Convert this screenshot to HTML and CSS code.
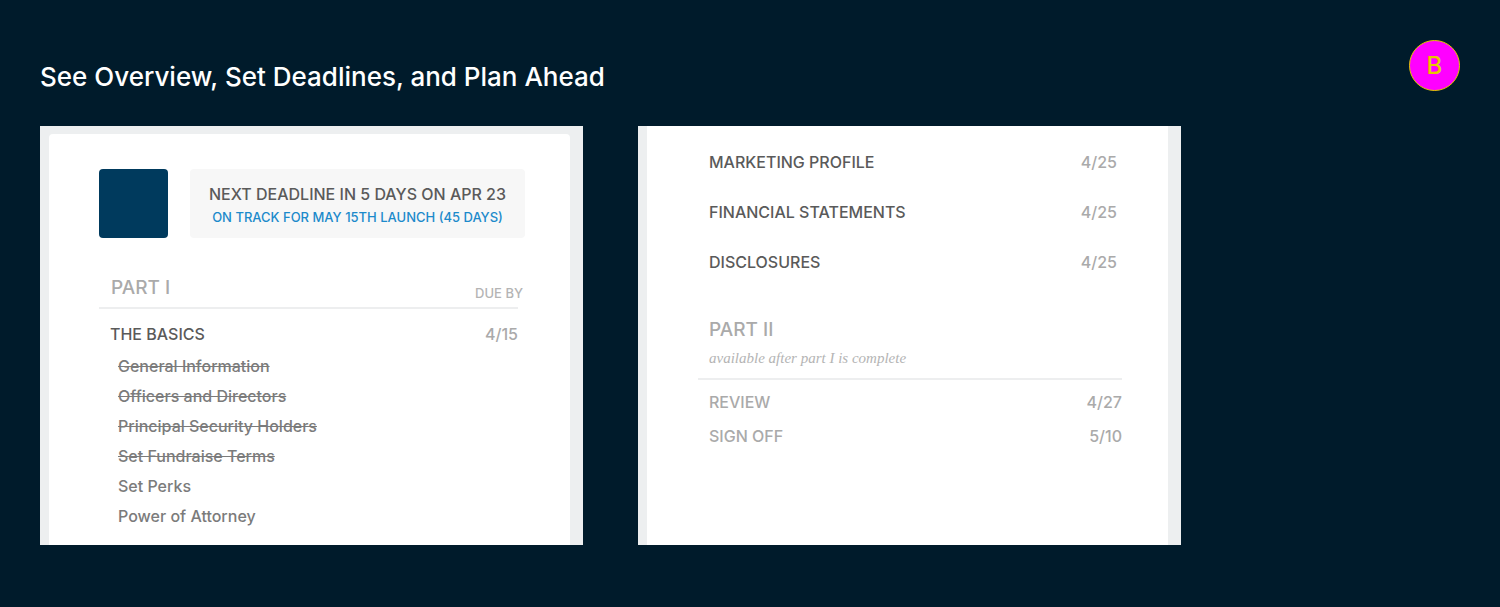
FILE: index.html
```html
<!DOCTYPE html>
<html lang="en">
<head>
  <meta charset="UTF-8">
  <meta name="viewport" content="width=device-width, initial-scale=1.0">
  <title>Overview and Deadlines</title>
  <link rel="stylesheet" href="styles.css">
</head>
<body>
  <header class="header">
    <h1>See Overview, Set Deadlines, and Plan Ahead</h1>
    <span class="badge">B</span>
  </header>

  <main class="panels">
    <div class="panel panel-first">
      <section class="sheet">
        <div class="deadline">
          <div class="swatch"></div>
          <div class="callout">
            <p class="next">NEXT DEADLINE IN 5 DAYS ON APR 23</p>
            <p class="track">ON TRACK FOR MAY 15TH LAUNCH (45 DAYS)</p>
          </div>
        </div>

        <div class="part">
          <h2>PART I</h2>
          <span class="due">DUE BY</span>
        </div>
        <div class="basics">
          <div class="row">
            <h3>THE BASICS</h3>
            <span class="date">4/15</span>
          </div>
          <ul class="steps">
            <li><s>General Information</s></li>
            <li><s>Officers and Directors</s></li>
            <li><s>Principal Security Holders</s></li>
            <li><s>Set Fundraise Terms</s></li>
            <li>Set Perks</li>
            <li>Power of Attorney</li>
          </ul>
        </div>
      </section>
    </div>

    <div class="panel">
      <section class="sheet">
        <div class="tasks">
          <div class="row">
            <h3>MARKETING PROFILE</h3>
            <span class="date">4/25</span>
          </div>
          <div class="row">
            <h3>FINANCIAL STATEMENTS</h3>
            <span class="date">4/25</span>
          </div>
          <div class="row">
            <h3>DISCLOSURES</h3>
            <span class="date">4/25</span>
          </div>
        </div>

        <div class="part-two">
          <h2>PART II</h2>
          <p class="note">available after part I is complete</p>
        </div>
        <div class="later">
          <div class="row">
            <h3>REVIEW</h3>
            <span class="date">4/27</span>
          </div>
          <div class="row">
            <h3>SIGN OFF</h3>
            <span class="date">5/10</span>
          </div>
        </div>
      </section>
    </div>
  </main>
</body>
</html>
```
FILE: styles.css
```css
* {
  box-sizing: border-box;
}

body {
  margin: 0;
  padding: 40px;
  background-color: #001b2b;
  color: #5a5a5a;
  font-family: Inter, "Open Sans", sans-serif;
  font-weight: 500;
}

h1, h2, h3, p, ul {
  margin: 0;
  padding: 0;
  font-weight: 500;
}

.header {
  display: flex;
  justify-content: space-between;
  align-items: flex-start;
}

h1 {
  padding-top: 21px;
  color: #fff;
  font-size: 26px;
  line-height: 32px;
}

.badge {
  width: 51px;
  height: 51px;
  border: 1px solid #e6c800;
  border-radius: 50%;
  background-color: #f0f;
  color: #e6c800;
  font-size: 24px;
  line-height: 50px;
  text-align: center;
}

.panels {
  display: grid;
  grid-template-columns: 1fr 1fr;
  gap: 55px;
  max-width: 1141px;
  margin-top: 33px;
}

.panel {
  display: flex;
  padding: 0 13px 0 9px;
  background-color: #edeff0;
}

.panel-first {
  padding-top: 8px;
}

.sheet {
  flex: 1;
  padding: 0 46px 14px 51px;
  background-color: #fff;
}

.panel-first .sheet {
  padding: 35px 45px 14px 50px;
  border-radius: 4px 4px 0 0;
}

/* Deadline summary */
.deadline {
  display: flex;
  gap: 22px;
}

.swatch {
  width: 69px;
  height: 69px;
  border-radius: 4px;
  background-color: #003a5d;
}

.callout {
  flex: 1;
  padding-top: 13px;
  border-radius: 4px;
  background-color: #f7f7f7;
  text-align: center;
  white-space: nowrap;
}

.next {
  font-size: 16px;
  line-height: 24px;
}

.track {
  color: #1c8acb;
  font-size: 13px;
  line-height: 22px;
}

/* Parts and their rows */
h2 {
  color: #aaa;
  font-size: 19px;
  line-height: 24px;
}

h3 {
  font-size: 16px;
  line-height: 20px;
}

.part {
  display: flex;
  justify-content: space-between;
  align-items: flex-end;
  padding: 38px 2px 7px 12px;
}

.due {
  color: #b4b4b4;
  font-size: 13px;
  line-height: 14px;
}

.row {
  display: flex;
  justify-content: space-between;
  padding-left: 11px;
}

.date {
  color: #aaa;
  font-size: 16px;
  line-height: 20px;
}

.basics {
  margin-right: 7px;
  padding-top: 15px;
  border-top: 2px solid #edeeef;
}

.steps {
  padding: 7px 0 0 19px;
  color: #7b7b7b;
  font-size: 16px;
  line-height: 30px;
  list-style: none;
}

.tasks {
  display: grid;
  gap: 30px;
  padding: 26px 5px 0 0;
}

.part-two {
  padding: 46px 0 10px 11px;
}

.note {
  padding-top: 6px;
  color: #b4b4b4;
  font-family: "Liberation Serif", serif;
  font-size: 15px;
  font-style: italic;
  font-weight: 400;
  line-height: 20px;
}

.later {
  display: grid;
  gap: 14px;
  padding-top: 12px;
  border-top: 2px solid #edeeef;
}

.later h3 {
  color: #aaa;
}
```
